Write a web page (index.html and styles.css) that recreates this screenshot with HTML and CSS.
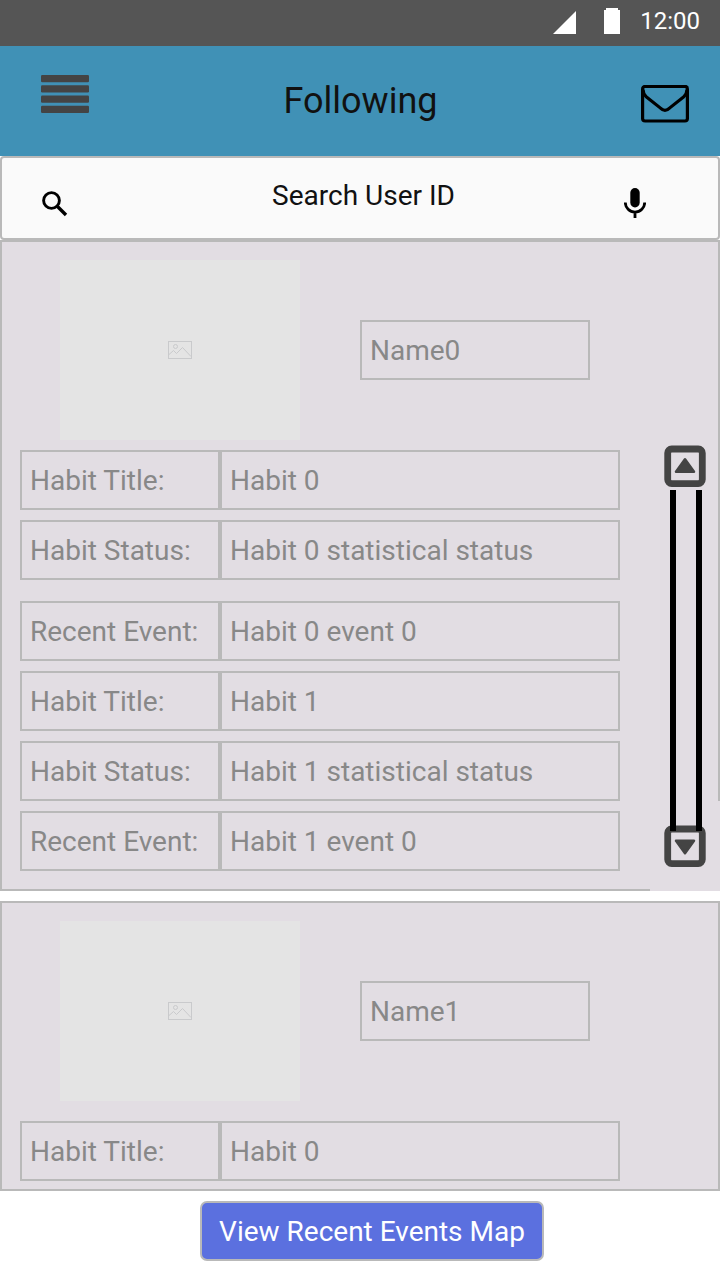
FILE: index.html
```html
<!DOCTYPE html>
<html lang="en">
<head>
<meta charset="utf-8">
<title>Following</title>
<link rel="stylesheet" href="styles.css">
</head>
<body>
<div class="status-bar">
  <svg class="signal" width="23" height="23" viewBox="0 0 23 23"><path d="M23 0V23H0Z" fill="#fff"/></svg>
  <svg class="battery" width="16" height="26" viewBox="0 0 16 26"><path d="M2 0H14V2H16V26H0V2H2Z" fill="#fff"/></svg>
  <span>12:00</span>
</div>
<header class="app-bar">
  <svg class="menu" width="48" height="38" viewBox="0 0 48 38" fill="#444"><rect width="48" height="7.2" rx="1.2"/><rect y="10.3" width="48" height="7.2" rx="1.2"/><rect y="20.6" width="48" height="7.2" rx="1.2"/><rect y="30.8" width="48" height="7.2" rx="1.2"/></svg>
  <h1>Following</h1>
  <svg class="mail" width="48" height="38" viewBox="0 0.400 48 38" fill="none" stroke="#000" stroke-width="3.200"><rect x="1.600" y="1.800" width="44.800" height="34.600" rx="2.500"/><path d="M2 5Q2 9.500 5.500 12.500L19.500 23.500Q24 28 28.500 23.500L42.500 12.500Q46 9.500 46 5"/></svg>
</header>
<div class="search">
  <svg class="lens" width="26" height="26" viewBox="0 0 26 26" fill="none" stroke="#000" stroke-width="2.900"><circle cx="9.500" cy="9.500" r="7.900"/><path d="M15.500 15.500L24 24" stroke-width="3.400"/></svg>
  <span>Search User ID</span>
  <svg class="mic" width="22" height="31" viewBox="0 0 22 31"><rect x="6.300" width="9.400" height="19.500" rx="4.700"/><path d="M1.300 14.500A9.700 9.700 0 0 0 20.700 14.500M11 24V30" fill="none" stroke="#000" stroke-width="2.800"/></svg>
</div>
<main>
  <section class="card first">
    <div class="profile">
      <div class="photo"><svg width="24" height="18" viewBox="0 0 24 18" fill="none" stroke="#c9cacc"><rect x=".5" y=".5" width="23" height="17"/><circle cx="7.500" cy="5.500" r="2"/><path d="M1 13.500L5.500 9.500L8.500 12.500L14.500 6.500L23 15.500"/></svg></div>
      <div class="field name">Name0</div>
    </div>
    <div class="rows">
      <div class="row top"><div class="field">Habit Title:</div><div class="field">Habit 0</div></div>
      <div class="row top"><div class="field">Habit Status:</div><div class="field">Habit 0 statistical status</div></div>
      <div class="row event"><div class="field">Recent Event:</div><div class="field">Habit 0 event 0</div></div>
      <div class="row"><div class="field">Habit Title:</div><div class="field">Habit 1</div></div>
      <div class="row"><div class="field">Habit Status:</div><div class="field">Habit 1 statistical status</div></div>
      <div class="row"><div class="field">Recent Event:</div><div class="field">Habit 1 event 0</div></div>
    </div>
    <div class="corner"></div>
    <div class="scrollbar">
      <svg class="arrow" width="42" height="42" viewBox="0 -.3 42 42"><rect x="3.700" y="3.700" width="34.600" height="34.600" rx="4" fill="none" stroke="#444" stroke-width="6.800"/><path d="M21 14L30 26.500H12Z" fill="#444" stroke="#444" stroke-width="2.500" stroke-linejoin="round"/></svg>
      <div class="track"></div>
      <svg class="arrow down" width="42" height="42" viewBox="0 -.3 42 42"><rect x="3.700" y="3.700" width="34.600" height="34.600" rx="4" fill="none" stroke="#444" stroke-width="6.800"/><path d="M21 28L30 15.500H12Z" fill="#444" stroke="#444" stroke-width="2.500" stroke-linejoin="round"/></svg>
    </div>
  </section>
  <section class="card second">
    <div class="profile">
      <div class="photo"><svg width="24" height="18" viewBox="0 0 24 18" fill="none" stroke="#c9cacc"><rect x=".5" y=".5" width="23" height="17"/><circle cx="7.500" cy="5.500" r="2"/><path d="M1 13.500L5.500 9.500L8.500 12.500L14.500 6.500L23 15.500"/></svg></div>
      <div class="field name">Name1</div>
    </div>
    <div class="rows">
      <div class="row"><div class="field">Habit Title:</div><div class="field">Habit 0</div></div>
    </div>
  </section>
</main>
<button class="map-button">View Recent Events Map</button>
</body>
</html>
```
FILE: styles.css
```css
* { box-sizing: border-box; }
body {
  margin: 0;
  height: 1280px;
  overflow: hidden;
  background: #fff;
  font: 28px/32px Roboto, sans-serif;
}
svg { display: block; flex: none; }
.status-bar {
  height: 46px;
  display: flex;
  justify-content: flex-end;
  padding: 0 20px 0 0;
  background: #555;
  color: #fff;
  font-size: 24px;
  line-height: 42px;
}
.signal { margin: 11px 28px 0 0; }
.battery { margin: 8px 20px 0 0; }
.app-bar {
  height: 110px;
  display: grid;
  grid-template-columns: 48px 1fr 48px;
  padding: 0 31px 0 41px;
  background: #4091b6;
}
.menu { margin-top: 29px; }
.mail { margin-top: 39px; }
.app-bar h1 {
  margin: 0 9px 0 0;
  color: #111;
  font-size: 36px;
  font-weight: 400;
  line-height: 110px;
  text-align: center;
}
.search {
  height: 84px;
  display: grid;
  grid-template-columns: 26px 1fr 22px;
  padding: 0 72px 0 40px;
  border: 2px solid #b9b9b9;
  border-radius: 4px;
  background: #fafafa;
  color: #111;
  line-height: 76px;
  text-align: center;
}
.search span { padding-left: 35px; }
.lens { margin-top: 33px; }
.mic { margin-top: 30px; }
.card {
  position: relative;
  padding: 18px;
  border: 2px solid #b9b9b9;
  background: #e2dde3;
}
.first { height: 651px; }
.second { height: 290px; margin-top: 10px; }
.profile { display: flex; align-items: center; gap: 60px; padding-left: 40px; }
.photo {
  display: grid;
  place-items: center;
  width: 240px;
  height: 180px;
  background: #e4e4e4;
}
.field {
  height: 60px;
  padding: 0 8px;
  border: 2px solid #b9b9b9;
  color: #888;
  line-height: 57px;
  white-space: nowrap;
}
.name { width: 230px; }
.rows { display: grid; gap: 10px; margin-top: 10px; width: 600px; }
.second .rows { margin-top: 20px; }
.row { display: grid; grid-template-columns: 200px 400px; }
.top .field { line-height: 58px; }
.event { margin-top: 11px; }
.corner {
  position: absolute;
  right: -2px;
  bottom: -2px;
  width: 70px;
  height: 90px;
  background: #e2dde3;
}
.scrollbar {
  position: absolute;
  top: 203px;
  right: 12px;
  width: 42px;
}
.track {
  position: relative;
  z-index: 1;
  width: 32px;
  height: 341px;
  margin: 3px 0 0 6px;
  border: solid #000;
  border-width: 0 6px;
}
.down { margin-top: -6px; }
.map-button {
  display: block;
  width: 344px;
  height: 60px;
  margin: 10px 0 0 200px;
  padding: 1px 0 0;
  border: 2px solid #b9b9b9;
  border-radius: 7px;
  background: #5b70df;
  color: #fff;
  font: inherit;
}
```
